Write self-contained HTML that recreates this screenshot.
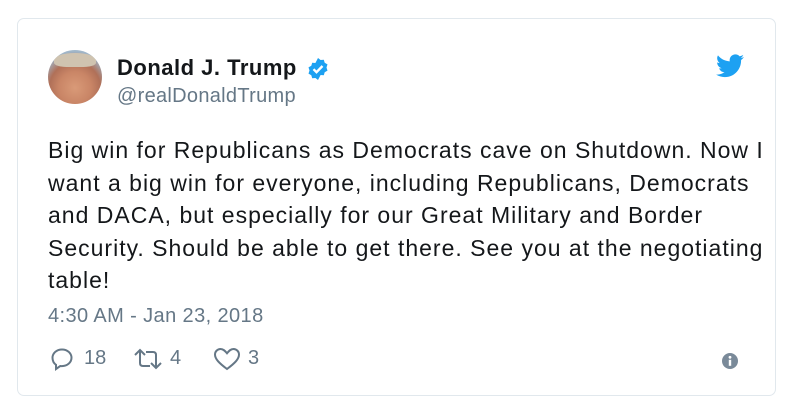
<!DOCTYPE html>
<html><head><style>
body{margin:0;background:#fff;width:798px;height:420px;font-family:"Liberation Sans",Arial,sans-serif;}
.card{position:absolute;left:17px;top:18px;width:759px;height:378px;border:1px solid #e1e8ed;border-radius:7px;box-sizing:border-box;}
.av{position:absolute;left:48px;top:50px;width:54px;height:54px;border-radius:50%;overflow:hidden;background:radial-gradient(circle at 50% 70%,#d99a78 0,#c98566 35%,#b07058 55%,#9fb5c8 78%,#c4d4e2 100%);}
.av:before{content:"";position:absolute;left:6px;top:3px;width:42px;height:14px;border-radius:50% 50% 30% 30%;background:#cfc3b0;}
.name{position:absolute;left:117px;top:55px;font-size:22px;font-weight:bold;color:#14171a;letter-spacing:0.5px;}
.handle{position:absolute;left:117px;top:85px;font-size:20px;color:#657786;letter-spacing:0.3px;}
.text{position:absolute;left:48px;top:134px;white-space:nowrap;font-size:23px;line-height:32.5px;color:#14171a;letter-spacing:1px;}
.time{position:absolute;left:48px;top:305px;font-size:20px;color:#657786;letter-spacing:0.4px;}
.act{position:absolute;top:347px;font-size:20px;color:#657786;}
</style></head><body>
<div class="card"></div>
<div class="av"></div>
<div class="name">Donald J. Trump</div>
<svg style="position:absolute;left:306px;top:57px" width="24" height="24" viewBox="0 0 24 24"><path fill="#1da1f2" d="M12 1l2.6 2 3.2-.3.9 3.1 2.8 1.6-1 3.1 1 3.1-2.8 1.6-.9 3.1-3.2-.3L12 23l-2.6-2-3.2.3-.9-3.1-2.8-1.6 1-3.1-1-3.1 2.8-1.6.9-3.1 3.2.3z"/><path d="M7.5 12.2l3 3 6-6.2" stroke="#fff" stroke-width="2.4" fill="none"/></svg>
<div class="handle">@realDonaldTrump</div>
<svg style="position:absolute;left:716px;top:54px" width="28" height="24" viewBox="0 0 24 20"><path fill="#1da1f2" d="M24 2.4c-.9.4-1.8.6-2.8.8 1-.6 1.8-1.6 2.2-2.7-1 .6-2 1-3.1 1.2C19.4.6 18.1 0 16.6 0c-2.7 0-4.9 2.2-4.9 4.9 0 .4 0 .8.1 1.1C7.7 5.8 4.1 3.9 1.7.9c-.4.7-.7 1.6-.7 2.5 0 1.7.9 3.2 2.2 4.1-.8 0-1.6-.2-2.2-.6v.1c0 2.4 1.7 4.4 3.9 4.8-.4.1-.8.2-1.3.2-.3 0-.6 0-.9-.1.6 2 2.4 3.4 4.6 3.4-1.7 1.3-3.8 2.1-6.1 2.1-.4 0-.8 0-1.2-.1 2.2 1.4 4.8 2.2 7.5 2.2 9.1 0 14-7.5 14-14v-.6c1-.7 1.8-1.6 2.5-2.5z"/></svg>
<div class="text">Big win for Republicans as Democrats cave on Shutdown. Now I<br>want a big win for everyone, including Republicans, Democrats<br>and DACA, but especially for our Great Military and Border<br>Security. Should be able to get there. See you at the negotiating<br>table!</div>
<div class="time">4:30 AM - Jan 23, 2018</div>
<svg style="position:absolute;left:50px;top:347px" width="24" height="24" viewBox="0 0 24 24"><path d="M12 2.5c5.3 0 9.5 3.7 9.5 8.3s-4.2 8.3-9.5 8.3c-.6 0-1.2 0-1.8-.1L6 22v-4.2C3.8 16.3 2.5 13.7 2.5 10.8 2.5 6.2 6.7 2.5 12 2.5z" fill="none" stroke="#657786" stroke-width="2"/></svg>
<div class="act" style="left:84px">18</div>
<svg style="position:absolute;left:133px;top:348px" width="30" height="22" viewBox="0 0 30 22"><path d="M2 7l5-5 5 5M7 2v13c0 2 1 3 3 3h7M28 15l-5 5-5-5M23 20V7c0-2-1-3-3-3h-7" fill="none" stroke="#657786" stroke-width="2"/></svg>
<div class="act" style="left:170px">4</div>
<svg style="position:absolute;left:213px;top:347px" width="28" height="24" viewBox="0 0 28 24"><path d="M14 22C6 16 2 12 2 7.5 2 4.5 4.5 2 7.5 2c2.8 0 4.5 1.8 6.5 4.3C16 3.8 17.7 2 20.5 2 23.5 2 26 4.5 26 7.5 26 12 22 16 14 22z" fill="none" stroke="#657786" stroke-width="2"/></svg>
<div class="act" style="left:248px">3</div>
<svg style="position:absolute;left:722px;top:353px" width="16" height="16" viewBox="0 0 16 16"><circle cx="8" cy="8" r="8" fill="#7a8a99"/><circle cx="8" cy="4.3" r="1.4" fill="#fff"/><rect x="6.8" y="6.8" width="2.4" height="6" fill="#fff"/></svg>
</body></html>
